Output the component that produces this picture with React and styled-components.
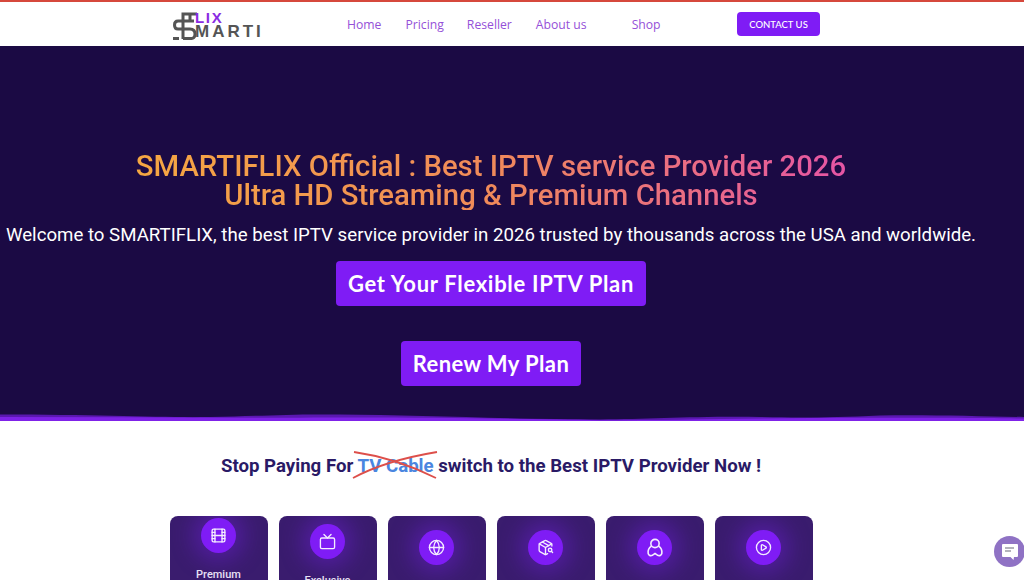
import styled, { createGlobalStyle } from "styled-components";
import { Film, Tv, Globe, PackageSearch, CirclePlay } from "lucide-react";

const navList = [
  { id: 1, text: "Home", gap: 24 },
  { id: 2, text: "Pricing", gap: 23 },
  { id: 3, text: "Reseller", gap: 24 },
  { id: 4, text: "About us", gap: 45 },
  { id: 5, text: "Shop", gap: 0 },
];

const PersonIcon = () => (
  <svg width="18" height="22" viewBox="0 0 20 24" fill="none" stroke="currentColor" strokeWidth="1.8">
    <circle cx="10" cy="7" r="4.6" />
    <path d="M6 10c-3 2-4 5-3.6 8 .3 2.2 2.8 3 4.6 2.2L10 18l3 2.2c1.8.8 4.3 0 4.6-2.2.4-3-.6-6-3.6-8" />
  </svg>
);

const cards = [
  { id: 1, icon: <Film size={17} strokeWidth={1.9} />, top: 2, title: "Premium" },
  { id: 2, icon: <Tv size={17} strokeWidth={1.9} />, top: 8, title: "Exclusive" },
  { id: 3, icon: <Globe size={17} strokeWidth={1.9} />, top: 14, title: "Global" },
  { id: 4, icon: <PackageSearch size={17} strokeWidth={1.9} />, top: 14, title: "VOD" },
  { id: 5, icon: <PersonIcon />, top: 14, title: "Support" },
  { id: 6, icon: <CirclePlay size={17} strokeWidth={1.9} />, top: 14, title: "Streaming" },
];

function App() {
  return (
    <Page>
      <GlobalStyle />
      <Header>
        <Logo>
          <svg width="24" height="28" viewBox="0 0 24 28" fill="none" stroke="#555" strokeWidth="3">
            <path d="M10 27V2H24" />
            <path d="M17 2V9" />
            <path d="M21 9H5Q1.500 9 1.500 13T5 17H17Q22 17 22 22T17 26.500H10" />
            <path d="M0 26.500H6" />
          </svg>
          <LogoText>
            <LogoTop>LIX</LogoTop>
            <LogoBottom>MARTI</LogoBottom>
          </LogoText>
        </Logo>
        <Gnb>
          {navList.map((item) => (
            <NavItem key={item.id} $gap={item.gap}>
              {item.text}
            </NavItem>
          ))}
        </Gnb>
        <ContactButton>CONTACT US</ContactButton>
      </Header>

      <Hero>
        <HeroTitle>
          SMARTIFLIX Official : Best IPTV service Provider 2026
          <br />
          Ultra HD Streaming &amp; Premium Channels
        </HeroTitle>
        <HeroText>
          Welcome to SMARTIFLIX, the best IPTV service provider in 2026 trusted by thousands across the USA and worldwide.
        </HeroText>
        <HeroButton $spacing={0.7}>Get Your Flexible IPTV Plan</HeroButton>
        <HeroButton $spacing={0.4}>Renew My Plan</HeroButton>
        <Wave viewBox="0 0 1024 10" preserveAspectRatio="none">
          <path
            d="M0 2C100 2 160 6 210 5C260 4 290 1 340 2C420 3 520 8 600 8C650 8 690 4 760 5C800 6 830 6 880 3C930 2 980 4 1024 5V10H0Z"
            fill="#5a18b0"
          />
          <path
            d="M0 5C100 5 200 6 300 6C400 5 520 7 600 9C680 9 760 6 860 6C930 6 980 6 1024 7V10H0Z"
            fill="#7f22e8"
          />
        </Wave>
      </Hero>

      <Offer>
        <OfferTitle>
          Stop Paying For{" "}
          <Crossed>
            TV Cable
            <CrossMark viewBox="0 0 86 30" fill="none" stroke="#dd4f4a" strokeWidth="1.8">
              <path d="M1 27C25 14 55 6 85 1" />
              <path d="M2 1C30 5 60 15 84 27" />
            </CrossMark>
          </Crossed>{" "}
          switch to the Best IPTV Provider Now !
        </OfferTitle>
        <CardRow>
          {cards.map((card) => (
            <Card key={card.id} $top={card.top}>
              <IconCircle>{card.icon}</IconCircle>
              <CardTitle>{card.title}</CardTitle>
            </Card>
          ))}
        </CardRow>
      </Offer>

      <ChatButton>
        <svg width="18" height="18" viewBox="0 0 18 18">
          <path d="M2 1h14a1 1 0 0 1 1 1v11a1 1 0 0 1-1 1h-3l-.500 3-3-3H2a1 1 0 0 1-1-1V2a1 1 0 0 1 1-1z" fill="#fff" />
          <path d="M4 5h9M4 8h6" stroke="#9a9aa5" strokeWidth="1.300" />
        </svg>
      </ChatButton>
    </Page>
  );
}

const GlobalStyle = createGlobalStyle`
  html, body {
    margin: 0;
    height: 580px;
    overflow: hidden;
    background: #fff;
  }
`;

const Page = styled.div`
  width: 1024px;
  height: 580px;
  overflow: hidden;
  font-family: Roboto, sans-serif;
`;

const Header = styled.header`
  display: flex;
  align-items: center;
  height: 44px;
  padding-left: 173px;
  background: #fff;
  border-top: 2px solid #d6483c;
`;

const Logo = styled.div`
  display: flex;
  align-items: flex-end;
  width: 174px;
  height: 28px;
  margin-top: 3px;
`;

const LogoText = styled.div`
  display: flex;
  flex-direction: column;
  margin-left: -2px;
  font-family: "Liberation Sans", sans-serif;
`;

const LogoTop = styled.span`
  font-size: 15px;
  line-height: 13px;
  font-weight: 700;
  letter-spacing: 1.700px;
  color: #8a2be2;
`;

const LogoBottom = styled.span`
  font-size: 17px;
  line-height: 16px;
  font-weight: 700;
  letter-spacing: 3px;
  color: #555;
`;

const Gnb = styled.nav`
  display: flex;
  width: 390px;
`;

const NavItem = styled.a`
  margin-right: ${(props) => props.$gap}px;
  font-family: "Open Sans", sans-serif;
  font-size: 12.200px;
  color: #9550d8;
`;

const ContactButton = styled.button`
  width: 83px;
  height: 24px;
  padding: 0;
  border: none;
  border-radius: 4px;
  background: #7f1cf5;
  color: #fff;
  font-family: Lato, sans-serif;
  font-size: 9.500px;
  font-weight: 500;
`;

const Hero = styled.section`
  position: relative;
  display: flex;
  flex-direction: column;
  align-items: center;
  height: 375px;
  padding-top: 106px;
  padding-right: 42px;
  box-sizing: border-box;
  background: #1b0a44;
`;

const HeroTitle = styled.h1`
  margin: 0;
  font-size: 29.300px;
  line-height: 29px;
  font-weight: 500;
  text-align: center;
  white-space: nowrap;
  background: linear-gradient(90deg, #f5a742 0%, #f08a5a 50%, #e555a5 100%);
  -webkit-background-clip: text;
  background-clip: text;
  color: transparent;
`;

const HeroText = styled.p`
  margin: 14px 0 15px;
  font-size: 18.670px;
  line-height: 22px;
  color: #fff;
  white-space: nowrap;
`;

const HeroButton = styled.button`
  height: 45px;
  margin-bottom: 35px;
  padding: 0 12px;
  border: none;
  border-radius: 4px;
  background: #7f1cf5;
  color: #fff;
  font-family: Lato, sans-serif;
  font-size: 22px;
  font-weight: 700;
  letter-spacing: ${(props) => props.$spacing}px;
`;

const Wave = styled.svg`
  position: absolute;
  left: 0;
  bottom: 0;
  width: 100%;
  height: 8px;
`;

const Offer = styled.section`
  display: flex;
  flex-direction: column;
  align-items: center;
  padding-right: 42px;
  background: #fff;
`;

const OfferTitle = styled.h2`
  margin: 34px 0 0;
  font-size: 18.650px;
  line-height: 22px;
  font-weight: 700;
  color: #2a1a66;
  white-space: nowrap;
`;

const Crossed = styled.span`
  position: relative;
  color: #4a86e0;
`;

const CrossMark = styled.svg`
  position: absolute;
  left: -6px;
  top: -4px;
  width: 88px;
  height: 30px;
`;

const CardRow = styled.div`
  display: flex;
  gap: 11px;
  margin-top: 39px;
`;

const Card = styled.div`
  display: flex;
  flex-direction: column;
  align-items: center;
  width: 98px;
  height: 150px;
  padding-top: ${(props) => props.$top}px;
  box-sizing: border-box;
  overflow: hidden;
  border-radius: 8px;
  background: #3a1c6e;
`;

const IconCircle = styled.div`
  display: flex;
  flex-shrink: 0;
  align-items: center;
  justify-content: center;
  width: 35px;
  height: 35px;
  border-radius: 50%;
  background: #7f1cf5;
  color: #f4ecff;
  box-shadow: 0 0 22px 8px rgba(110, 30, 220, 0.45);
`;

const CardTitle = styled.div`
  margin-top: 15px;
  font-size: 11px;
  line-height: 14px;
  font-weight: 500;
  color: #e8e0f5;
`;

const ChatButton = styled.div`
  position: fixed;
  left: 994px;
  top: 536px;
  display: flex;
  align-items: center;
  justify-content: center;
  width: 31px;
  height: 31px;
  border-radius: 50%;
  background: #8f72c4;
`;

export default App;
